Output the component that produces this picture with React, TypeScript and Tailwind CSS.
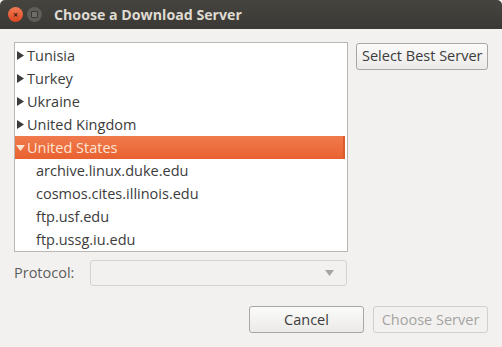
import { useState } from 'react'

const countries = ['Tunisia', 'Turkey', 'Ukraine', 'United Kingdom']
const mirrors = [
  'archive.linux.duke.edu',
  'cosmos.cites.illinois.edu',
  'ftp.usf.edu',
  'ftp.ussg.iu.edu',
]

function Arrow({ open, className }: { open?: boolean; className?: string }) {
  return (
    <svg width="9" height="11" viewBox="0 0 9 11" className={className}>
      {open ? (
        <path d="M0 3 L9 3 L4.5 9 Z" fill="currentColor" />
      ) : (
        <path d="M1 1 L8 5.5 L1 10 Z" fill="currentColor" />
      )}
    </svg>
  )
}

export default function App() {
  const [selected] = useState('United States')

  return (
    <div
      className="w-[502px] h-[347px] bg-[#f2f1f0] flex flex-col overflow-hidden text-[#3c3c3c]"
      style={{ fontFamily: '"Open Sans", "Noto Sans", sans-serif' }}
    >
      {/* title bar */}
      <div className="h-[29px] shrink-0 flex items-center rounded-t-[5px] bg-gradient-to-b from-[#45443f] to-[#3a3935]">
        <div className="ml-[8px] w-[15px] h-[15px] rounded-full bg-gradient-to-b from-[#f37a53] to-[#d9461d] flex items-center justify-center text-[9px] leading-none text-[#3a1a10] font-bold">
          ×
        </div>
        <div className="ml-[4px] w-[15px] h-[15px] rounded-full bg-[#5e5d58] flex items-center justify-center">
          <div className="w-[7px] h-[7px] rounded-[1px] border border-[#3a3935] bg-[#6f6e69]" />
        </div>
        <span className="ml-[12px] text-[14.2px] font-bold text-[#dfdbd2]">
          Choose a Download Server
        </span>
      </div>

      <div className="flex pl-[14px] pt-[13px] gap-[8px]">
        {/* tree list */}
        <div className="w-[334px] h-[210px] border border-[#b8b7b3] bg-white overflow-hidden text-[14.5px] pt-[1px]">
          {countries.map((c) => (
            <div key={c} className="h-[23px] flex items-center pl-[1px]">
              <Arrow className="text-[#3c3c3c] mr-[2px]" />
              <span>{c}</span>
            </div>
          ))}
          <div className="h-[23px] flex items-center pl-[1px] mr-[2px] bg-gradient-to-b from-[#f07a4c] to-[#e9612f] border-r-2 border-[#dd5a2b] text-[#fde5d6]">
            <Arrow open className="text-[#fde5d6] mr-[2px]" />
            <span>{selected}</span>
          </div>
          {mirrors.map((m) => (
            <div key={m} className="h-[23px] flex items-center pl-[21px]">
              {m}
            </div>
          ))}
        </div>

        <button className="h-[27px] px-[5px] mt-[1px] rounded-[3px] border border-[#a8a7a3] bg-gradient-to-b from-[#fbfbfa] to-[#ebeae8] text-[14.5px] text-[#3c3c3c] leading-none">
          Select Best Server
        </button>
      </div>

      <div className="flex items-center pl-[14px] mt-[8px] text-[14.5px]">
        <span className="w-[76px] text-[#5d5d5d]">Protocol:</span>
        <div className="w-[257px] h-[26px] rounded-[3px] border border-[#d3d2cf] bg-[#f2f1f0] flex items-center justify-end pr-[12px]">
          <svg width="9" height="6" viewBox="0 0 9 6">
            <path d="M0 0 L9 0 L4.5 6 Z" fill="#a5a4a0" />
          </svg>
        </div>
      </div>

      <div className="flex justify-end gap-[9px] pr-[14px] mt-[20px] text-[14.5px]">
        <button className="w-[115px] h-[27px] rounded-[3px] border border-[#a8a7a3] bg-gradient-to-b from-[#fbfbfa] to-[#ebeae8] text-[#3c3c3c]">
          Cancel
        </button>
        <button className="w-[115px] h-[27px] rounded-[3px] border border-[#d0cfcb] bg-[#f2f1f0] text-[#a5a4a0]">
          Choose Server
        </button>
      </div>
    </div>
  )
}
